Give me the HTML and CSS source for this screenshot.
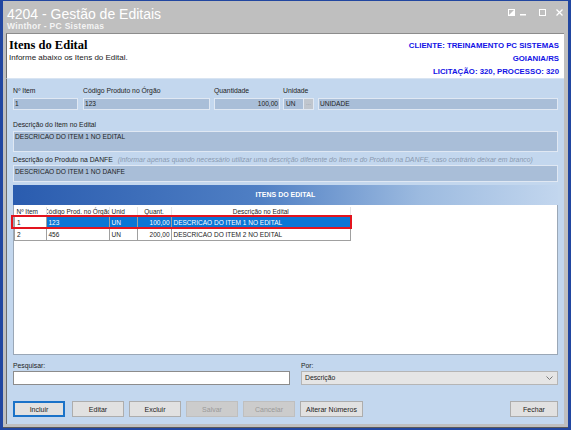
FILE: index.html
```html
<!DOCTYPE html>
<html lang="pt-BR">
<head>
<meta charset="UTF-8">
<title>4204 - Gestão de Editais</title>
<link rel="stylesheet" href="styles.css">
</head>
<body>
<div class="window">
  <div class="titlebar">
    <div class="title-text">
      <div class="title">4204 - Gestão de Editais</div>
      <div class="subtitle">Winthor - PC Sistemas</div>
    </div>
    <div class="win-controls">
      <svg class="ic-restore" width="7" height="7" viewBox="0 0 7 7"><rect x="0.5" y="0.5" width="6" height="6" fill="none" stroke="#fff"/><path d="M1 6 L6 1 L6 6 Z" fill="#fff"/></svg>
      <svg class="ic-min" width="6" height="7" viewBox="0 0 6 7"><rect x="0" y="5" width="6" height="1.5" fill="#fff"/></svg>
      <svg class="ic-max" width="7" height="7" viewBox="0 0 7 7"><rect x="0.5" y="0.5" width="6" height="6" fill="none" stroke="#fff"/></svg>
      <svg class="ic-close" width="7" height="7" viewBox="0 0 7 7"><path d="M0.5 0.5 L6.5 6.5 M6.5 0.5 L0.5 6.5" stroke="#fff" stroke-width="1.3"/></svg>
    </div>
  </div>

  <div class="header">
    <div class="header-left">
      <h1>Itens do Edital</h1>
      <p>Informe abaixo os Itens do Edital.</p>
    </div>
    <div class="header-right">
      <div>CLIENTE: TREINAMENTO PC SISTEMAS</div>
      <div>GOIANIA/RS</div>
      <div>LICITAÇÃO: 320, PROCESSO: 320</div>
    </div>
  </div>

  <div class="panel">
    <div class="field-row">
      <div class="field f-item">
        <label>Nº Item</label>
        <div class="input">1</div>
      </div>
      <div class="field f-codigo">
        <label>Código Produto no Órgão</label>
        <div class="input">123</div>
      </div>
      <div class="field f-qtd">
        <label>Quantidade</label>
        <div class="input right">100,00</div>
      </div>
      <div class="field f-unid">
        <label>Unidade</label>
        <div class="unid-box">
          <div class="input un">UN</div>
          <div class="dots">...</div>
        </div>
      </div>
      <div class="field f-unid-desc">
        <label>&nbsp;</label>
        <div class="input">UNIDADE</div>
      </div>
    </div>

    <label class="block-label">Descrição do Item no Edital</label>
    <div class="input memo">DESCRICAO DO ITEM 1 NO EDITAL</div>

    <label class="block-label danfe-label">Descrição do Produto na DANFE <span class="hint">(informar apenas quando necessário utilizar uma descrição diferente do Item e do Produto na DANFE, caso contrário deixar em branco)</span></label>
    <div class="input danfe">DESCRICAO DO ITEM 1 NO DANFE</div>

    <div class="grid-caption">ITENS DO EDITAL</div>
    <div class="grid">
      <table>
        <thead>
          <tr>
            <th class="c-item"><div class="hcell left">Nº Item</div></th>
            <th class="c-cod"><div class="hcell">Código Prod. no Órgão</div></th>
            <th class="c-unid"><div class="hcell left">Unid</div></th>
            <th class="c-qtd"><div class="hcell">Quant.</div></th>
            <th class="c-desc"><div class="hcell">Descrição no Edital</div></th>
          </tr>
        </thead>
        <tbody>
          <tr class="selected">
            <td class="c-item">1</td>
            <td>123</td>
            <td>UN</td>
            <td class="num">100,00</td>
            <td>DESCRICAO DO ITEM 1 NO EDITAL</td>
          </tr>
          <tr>
            <td class="c-item">2</td>
            <td>456</td>
            <td>UN</td>
            <td class="num">200,00</td>
            <td>DESCRICAO DO ITEM 2 NO EDITAL</td>
          </tr>
        </tbody>
      </table>
      <div class="row-mark"></div>
    </div>

    <div class="search-row">
      <div class="field f-search">
        <label>Pesquisar:</label>
        <div class="input white"></div>
      </div>
      <div class="field f-por">
        <label>Por:</label>
        <div class="select">Descrição
          <svg width="7" height="4" viewBox="0 0 7 4"><path d="M0.5 0.5 L3.5 3.5 L6.5 0.5" fill="none" stroke="#777"/></svg>
        </div>
      </div>
    </div>

    <div class="button-row">
      <button class="btn focus">Incluir</button>
      <button class="btn">Editar</button>
      <button class="btn">Excluir</button>
      <button class="btn" disabled>Salvar</button>
      <button class="btn" disabled>Cancelar</button>
      <button class="btn wide">Alterar Números</button>
      <button class="btn close">Fechar</button>
    </div>
  </div>
</div>
</body>
</html>
```

FILE: styles.css
```css
body {
  margin: 0;
  padding: 0;
  background-color: #2146a0;
  font-family: "Liberation Sans", Arial, sans-serif;
}

.window {
  margin: 1px 3px 0 3px;
  height: 423px;
  background-color: #bfbfbf;
  display: flex;
  flex-direction: column;
  padding: 0 4px 3px 3px;
  border-bottom: 1px solid #5a5a5a;
}

.titlebar {
  height: 32px;
  display: flex;
  justify-content: space-between;
  align-items: flex-start;
  color: #fff;
}

.title-text {
  padding: 5px 0 0 1px;
}

.title {
  font-size: 14px;
  line-height: 16px;
}

.subtitle {
  font-size: 8.5px;
  font-weight: bold;
  line-height: 9px;
  letter-spacing: 0.3px;
  color: #f4f4f4;
}

.win-controls {
  display: flex;
  align-items: center;
  padding: 8px 1px 0 0;
}

.ic-min { margin-left: 5px; }
.ic-max { margin-left: 13px; }
.ic-close { margin-left: 10px; }

.header {
  height: 44px;
  background-color: #fff;
  border-top: 1px solid #8c8c8c;
  border-left: 1px solid #6d6d6d;
  display: flex;
  justify-content: space-between;
  padding: 0 5px 0 2px;
}

h1 {
  font-family: "Liberation Serif", "Times New Roman", serif;
  font-size: 12.5px;
  font-weight: bold;
  margin: 4px 0 0 0;
  line-height: 15px;
}

.header-left p {
  margin: 0;
  font-size: 8px;
  color: #222;
}

.header-right {
  text-align: right;
  color: #1212e6;
  font-weight: bold;
  font-size: 7.8px;
  line-height: 13px;
  padding-top: 5px;
}

.panel {
  flex: 1;
  background-color: #c3d7ee;
  border-left: 1px solid #6d6d6d;
  border-top: 1px solid #d8e4f2;
  padding: 7px 6px 0 6px;
  display: flex;
  flex-direction: column;
  font-size: 6.8px;
  color: #222;
}

label {
  display: block;
  line-height: 9px;
  height: 9px;
  white-space: nowrap;
}

.field-row {
  display: flex;
}

.field label {
  margin-bottom: 3px;
}

.input {
  box-sizing: border-box;
  height: 12px;
  background-color: #a9bed8;
  border: 1px solid #e0e8f3;
  padding: 0 1px;
  line-height: 10px;
  font-size: 6.6px;
  white-space: nowrap;
  overflow: hidden;
}

.input.right {
  text-align: right;
}

.f-item { width: 65px; margin-right: 5px; }
.f-codigo { width: 127px; margin-right: 4px; }
.f-qtd { width: 66px; margin-right: 3px; }
.f-unid { width: 31px; margin-right: 4px; }
.f-unid-desc { flex: 1; }

.unid-box {
  display: flex;
}

.input.un {
  width: 20px;
  border-right: none;
  padding-left: 2px;
}

.dots {
  width: 11px;
  height: 12px;
  box-sizing: border-box;
  background-color: #c0c6ce;
  border: 1px solid #e0e8f3;
  color: #8c99a8;
  font-size: 6px;
  line-height: 8px;
  text-align: center;
}

.block-label {
  margin-top: 10px;
  margin-bottom: 2px;
}

.block-label.danfe-label {
  margin-top: 3px;
  margin-bottom: 1px;
}

.input.memo {
  height: 21px;
}

.input.danfe {
  height: 17px;
  line-height: 12px;
}

.hint {
  color: #8a9ab0;
  font-style: italic;
  margin-left: 3px;
  font-size: 6.9px;
}

.grid-caption {
  margin-top: 3px;
  height: 20px;
  line-height: 20px;
  background: linear-gradient(to right, #2a5caf 0%, #4f7fc4 45%, #9dbbe0 75%, #c2d6ee 100%);
  color: #fff;
  font-weight: bold;
  font-size: 7px;
  text-align: center;
}

.grid {
  position: relative;
  height: 150px;
  background-color: #fff;
  border: 1px solid #9aa7b6;
  border-top: none;
  box-sizing: border-box;
}

table {
  border-collapse: collapse;
  table-layout: fixed;
  width: 337px;
  margin-top: 2px;
  font-size: 6.5px;
}

th {
  font-weight: normal;
  height: 9px;
  padding: 0;
  border-right: 1px solid #e4e4e4;
  overflow: hidden;
}

.hcell {
  display: flex;
  justify-content: center;
  white-space: nowrap;
  line-height: 9px;
}

.hcell.left {
  justify-content: flex-start;
  padding-left: 2px;
}

th.c-item { width: 31px; }
th.c-cod { width: 62px; }
th.c-unid { width: 27px; }
th.c-qtd { width: 33px; }

td {
  height: 11px;
  line-height: 11px;
  padding: 0 1px 0 2px;
  white-space: nowrap;
  overflow: hidden;
  border: 1px solid #a0a0a0;
}

td.num {
  text-align: right;
}

tr.selected td {
  background-color: #0a76d6;
  color: #fff;
}

tr.selected td.c-item {
  background-color: #fff;
  color: #222;
}

.row-mark {
  position: absolute;
  left: -3px;
  top: 10px;
  width: 337px;
  height: 10px;
  border: 2px solid #e3141e;
}

.search-row {
  display: flex;
  margin-top: 6px;
}

.search-row label {
  margin-bottom: 1px;
}

.f-search {
  width: 277px;
  margin-right: 11px;
}

.f-por {
  flex: 1;
}

.input.white {
  height: 14px;
  background-color: #fff;
  border: 1px solid #8c8c8c;
}

.select {
  box-sizing: border-box;
  height: 14px;
  background-color: #e5e5e5;
  border: 1px solid #b5b5b5;
  padding: 0 4px 0 3px;
  line-height: 12px;
  display: flex;
  justify-content: space-between;
  align-items: center;
}

.button-row {
  display: flex;
  margin-top: 16px;
}

.btn {
  font-family: "Liberation Sans", Arial, sans-serif;
  font-size: 7px;
  width: 52px;
  height: 16px;
  margin-right: 5px;
  padding: 0;
  background-color: #e1e1e1;
  border: 1px solid #adadad;
  color: #222;
}

.btn.focus {
  border: 2px solid #1a72c8;
  margin-right: 7px;
}

.btn:disabled {
  background-color: #cccccc;
  border-color: #bfbfbf;
  color: #9a9a9a;
}

.btn.wide {
  width: 63px;
}

.btn.close {
  width: 48px;
  margin-left: auto;
  margin-right: 0;
}
```
